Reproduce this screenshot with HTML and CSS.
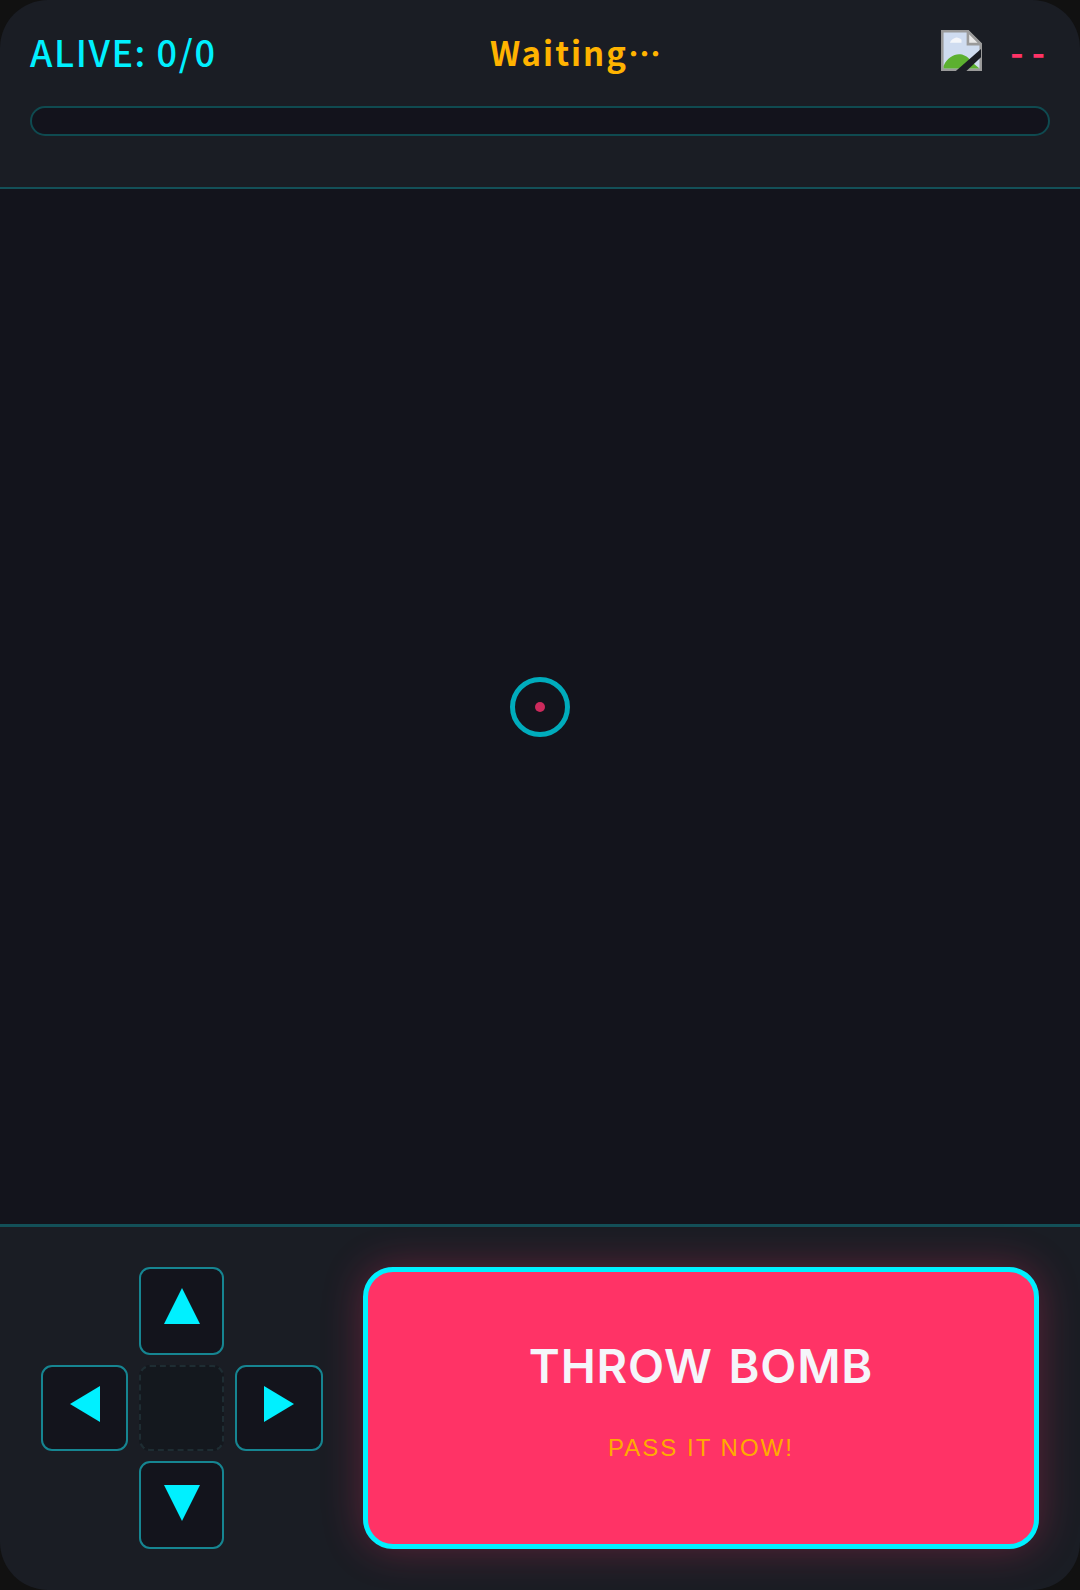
FILE: index.html
```html
<!DOCTYPE html>
<html lang="ja">
<head>
  <meta charset="UTF-8">
  <meta name="viewport" content="width=device-width, initial-scale=1.0">
  <title>Bomb Pass</title>
  <link rel="stylesheet" href="styles.css">
</head>
<body>
  <div class="app">
    <header class="hud">
      <div class="hud-row">
        <div class="alive">ALIVE: 0/0</div>
        <div class="status">Waiting…</div>
        <div class="holder">
          <svg class="broken-img" viewBox="0 0 16 16" width="41" height="41">
            <path d="M0.5 0.5H10.5L15.5 5.5V15.5H0.5Z" fill="#cfdcf0" stroke="#9a9a9a"/>
            <path d="M10.5 0.5V5.5H15.5Z" fill="#e8e8e8" stroke="#9a9a9a"/>
            <path d="M3.5 5H8V3.8C7.2 3 6 2.6 5.2 3.2C4.4 3.4 3.8 4.2 3.5 5Z" fill="#f4f6fa"/>
            <path d="M1 15V14C2.5 10.8 5 9.3 7.5 9.5C9.5 9.7 11 11 12 12.5L15 15Z" fill="#5cb030"/>
            <path d="M5.8 16L15.6 7.4V10.6L9.9 16Z" fill="#1a1d24"/>
          </svg>
          <div class="timer">--</div>
        </div>
      </div>
      <div class="progress"></div>
    </header>

    <main class="arena">
      <div class="reticle"><div class="reticle-dot"></div></div>
    </main>

    <footer class="controls">
      <div class="dpad">
        <div class="pad pad-up">
          <svg viewBox="0 0 36 36" width="36" height="36"><polygon points="18,0 36,36 0,36"/></svg>
        </div>
        <div class="pad pad-left">
          <svg viewBox="0 0 30 36" width="30" height="36"><polygon points="0,18 30,0 30,36"/></svg>
        </div>
        <div class="pad-center"></div>
        <div class="pad pad-right">
          <svg viewBox="0 0 30 36" width="30" height="36"><polygon points="30,18 0,0 0,36"/></svg>
        </div>
        <div class="pad pad-down">
          <svg viewBox="0 0 36 36" width="36" height="36"><polygon points="18,36 36,0 0,0"/></svg>
        </div>
      </div>
      <div class="throw">
        <div class="throw-title">THROW BOMB</div>
        <div class="throw-sub">PASS IT NOW!</div>
      </div>
    </footer>
  </div>
</body>
</html>
```

FILE: styles.css
```css
body {
  margin: 0;
  background: #111;
  font-family: "Liberation Sans", Arial, sans-serif;
}
.app {
  width: 1080px;
  height: 1590px;
  border-radius: 48px;
  overflow: hidden;
  display: flex;
  flex-direction: column;
  background: #1a1d24;
}
.hud {
  height: 157px;
  padding: 30px 30px 0;
  border-bottom: 2px solid #135058;
  flex-shrink: 0;
}
.hud-row {
  display: flex;
  justify-content: space-between;
  align-items: center;
  height: 41px;
  margin-bottom: 35px;
}
.alive,
.status,
.timer {
  font-family: "Noto Sans CJK JP", sans-serif;
  font-size: 36px;
  font-weight: 700;
  line-height: 41px;
}
.alive {
  color: #00f0ff;
  font-weight: 500;
  letter-spacing: 1.6px;
  padding-top: 2px;
}
.status {
  color: #ffb300;
  font-size: 33px;
  letter-spacing: 2px;
  margin-right: 5px;
  padding-top: 3px;
}
.holder {
  display: flex;
  align-items: center;
  gap: 28px;
}
.broken-img {
  display: block;
}
.timer {
  color: #ff3366;
  letter-spacing: 8px;
  margin-right: -3px;
}
.progress {
  height: 26px;
  border: 2px solid #0f4a50;
  border-radius: 15px;
  background: #13131c;
}
.arena {
  flex: 1;
  background: #13141c;
  display: flex;
  align-items: center;
  justify-content: center;
}
.reticle {
  width: 50px;
  height: 50px;
  border: 5px solid #00acbc;
  border-radius: 50%;
  display: flex;
  align-items: center;
  justify-content: center;
}
.reticle-dot {
  width: 10px;
  height: 10px;
  border-radius: 50%;
  background: #cc2a5c;
}
.controls {
  height: 366px;
  border-top: 3px solid #135058;
  flex-shrink: 0;
  display: flex;
  gap: 40px;
  padding: 40px 41px 41px 41px;
  box-sizing: border-box;
}
.dpad {
  display: grid;
  grid-template-columns: 87px 85px 88px;
  grid-template-rows: 88px 86px 88px;
  gap: 10px 11px;
  flex-shrink: 0;
}
.pad,
.pad-center {
  box-sizing: border-box;
  border-radius: 11px;
  display: flex;
  align-items: center;
  justify-content: center;
}
.pad {
  border: 2px solid #168591;
  background: #13141c;
}
.pad svg {
  fill: #00f0ff;
  display: block;
}
.pad-up svg {
  margin-bottom: 10px;
}
.pad-down svg {
  margin-bottom: 4px;
}
.pad-left svg,
.pad-right svg {
  margin-bottom: 9px;
}
.pad-center {
  grid-column: 2;
  grid-row: 2;
  border: 2px dashed #1e2d33;
  background: #14181e;
}
.pad-up {
  grid-column: 2;
  grid-row: 1;
}
.pad-left {
  grid-column: 1;
  grid-row: 2;
}
.pad-right {
  grid-column: 3;
  grid-row: 2;
}
.pad-down {
  grid-column: 2;
  grid-row: 3;
}
.throw {
  flex: 1;
  box-sizing: border-box;
  border: 5px solid #00f0ff;
  border-radius: 30px;
  padding-bottom: 16px;
  background: #ff3366;
  box-shadow: 0 0 40px rgba(255, 51, 102, 0.3);
  display: flex;
  flex-direction: column;
  align-items: center;
  justify-content: center;
  gap: 40px;
}
.throw-title {
  color: #f5f5fa;
  font-family: Inter, "Liberation Sans", sans-serif;
  font-weight: 600;
  font-size: 47px;
  letter-spacing: 0.8px;
  word-spacing: 3px;
  line-height: 56px;
}
.throw-sub {
  color: #ffab00;
  font-size: 24px;
  letter-spacing: 2px;
  line-height: 28px;
}
```
